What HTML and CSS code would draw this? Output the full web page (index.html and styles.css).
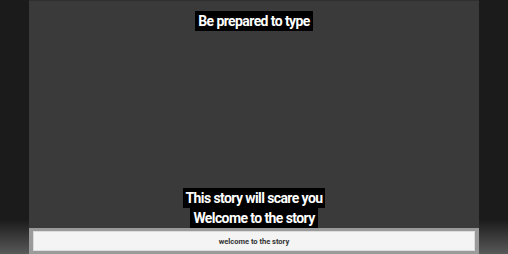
FILE: index.html
```html
<!DOCTYPE html>
<html lang="en">
<head>
    <meta charset="UTF-8">
    <meta name="viewport" content="width=device-width, initial-scale=1.0">
    <title>Story</title>
    <link rel="stylesheet" href="styles.css">
</head>
<body>
    <div class="stage">
        <div class="screen">
            <div class="title"><span class="caption">Be prepared to type</span></div>
            <div class="lines">
                <span class="caption">This story will scare you</span>
                <span class="caption">Welcome to the story</span>
            </div>
        </div>
        <div class="typebar">
            <input type="text" class="type-input" value="welcome to the story">
        </div>
    </div>
</body>
</html>
```

FILE: styles.css
```css
html, body {
    height: 100%;
}
body {
    margin: 0;
    font-family: Roboto, "Liberation Sans", sans-serif;
    background: linear-gradient(to bottom, #1b1b1b 0, #1b1b1b 220px, #595959 254px);
    overflow: hidden;
}
.stage {
    width: 450px;
    margin: 0 auto;
}
.screen {
    height: 228px;
    background: #3a3a3a;
    border-top: 1px solid #2f2f2f;
    box-sizing: border-box;
    display: flex;
    flex-direction: column;
    justify-content: space-between;
    align-items: center;
}
.title {
    margin-top: 10px;
}
.lines {
    display: flex;
    flex-direction: column;
    align-items: center;
}
.caption {
    display: inline-block;
    background: #000;
    color: #fff;
    font-weight: bold;
    font-size: 14px;
    letter-spacing: -0.6px;
    line-height: 20px;
    padding: 0 3px;
}
.typebar {
    background: #9a9a9a;
    height: 26px;
    padding: 3px 4px;
    box-sizing: border-box;
}
.type-input {
    display: block;
    width: 100%;
    height: 20px;
    box-sizing: border-box;
    border: 1px solid #dcdcdc;
    background: #f4f4f4;
    text-align: center;
    font-family: Roboto, "Liberation Sans", sans-serif;
    font-size: 7.5px;
    font-weight: bold;
    color: #333;
    padding: 0;
    outline: none;
}
```
